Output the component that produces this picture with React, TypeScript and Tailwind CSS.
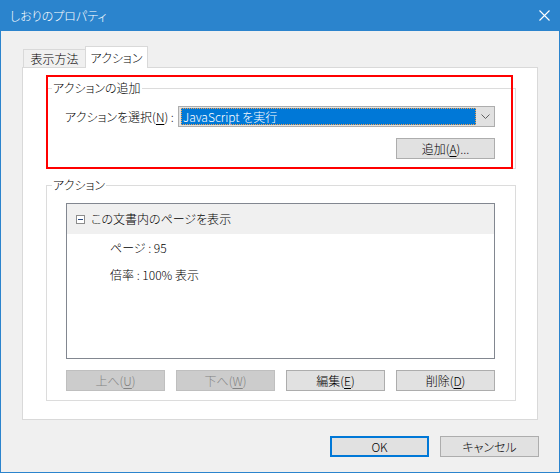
import React from "react";

const Mn = ({ k }: { k: string }) => (
  <span>
    (<span className="underline underline-offset-2">{k}</span>)
  </span>
);

function Btn({
  children,
  disabled,
  primary,
}: {
  children: React.ReactNode;
  disabled?: boolean;
  primary?: boolean;
}) {
  let cls = "w-[99px] h-[21px] flex items-center justify-center text-[12px] leading-none ";
  if (disabled) {
    cls += "bg-[#cccccc] border border-[#bfbfbf] text-[#838383]";
  } else if (primary) {
    cls += "bg-[#e1e1e1] border-2 border-[#0078d7] text-black";
  } else {
    cls += "bg-[#e1e1e1] border border-[#adadad] text-black";
  }
  return (
    <button type="button" disabled={disabled} className={cls}>
      {children}
    </button>
  );
}

export default function App() {
  return (
    <div className="w-[560px] h-[473px] flex flex-col font-['Noto_Sans_CJK_JP','Liberation_Sans',sans-serif] font-light [font-feature-settings:'palt'] text-[12px] text-black select-none">
      {/* title bar */}
      <div className="h-[31px] bg-[#2b84cd] flex items-center justify-between pl-[10px] pr-[10px] text-white">
        <span className="text-[12px]">しおりのプロパティ</span>
        <svg width="11" height="11" viewBox="0 0 11 11">
          <path d="M0.5 0.5 L10.5 10.5 M10.5 0.5 L0.5 10.5" stroke="white" strokeWidth="1.1" />
        </svg>
      </div>

      <div className="flex-1 bg-[#f0f0f0] border-x border-b border-[#2b84cd] flex flex-col">
        {/* tabs */}
        <div className="mt-[15px] ml-[22px] h-[21px] flex items-end">
          <div className="w-[62px] h-[18px] border-t border-l border-[#d9d9d9] bg-[#f0f0f0] flex items-center justify-center">
            表示方法
          </div>
          <div className="relative z-10 -mb-px w-[63px] h-[22px] border-x border-t border-[#d9d9d9] bg-white flex items-center justify-center">
            アクション
          </div>
        </div>

        {/* tab panel */}
        <div className="relative ml-[21px] w-[516px] h-[353px] border border-[#d9d9d9] bg-white">
          {/* アクションの追加 */}
          <fieldset className="ml-[23px] mt-[12px] w-[470px] border border-[#dcdcdc] pb-[9px]">
            <legend className="ml-[5px] px-[1px] leading-[16px]">アクションの追加</legend>
            <div className="pl-[18px] pr-[20px]">
              <div className="mt-[10px] flex items-center justify-between h-[21px]">
                <span>
                  アクションを選択<Mn k="N" /> :
                </span>
                <div className="w-[317px] h-[21px] border border-[#adadad] bg-[#e1e1e1] flex pl-[2px] py-[1px]">
                  <div className="flex-1 bg-[#0078d7] border border-dotted border-[#f0a050] text-white flex items-center pl-[1px] leading-none">
                    JavaScript を実行
                  </div>
                  <div className="w-[18px] flex items-center justify-center">
                    <svg width="9" height="5" viewBox="0 0 9 5">
                      <path d="M0.5 0.5 L4.5 4.5 L8.5 0.5" fill="none" stroke="#606060" strokeWidth="1" />
                    </svg>
                  </div>
                </div>
              </div>
              <div className="mt-[11px] flex justify-end">
                <Btn>
                  追加<Mn k="A" />...
                </Btn>
              </div>
            </div>
          </fieldset>

          {/* アクション */}
          <fieldset className="ml-[23px] mt-[8px] w-[470px] border border-[#dcdcdc] pb-[9px]">
            <legend className="ml-[5px] px-[1px] leading-[16px]">アクション</legend>
            <div className="pl-[19px] pr-[20px]">
              <div className="mt-[10px] h-[156px] border border-[#828790] bg-white">
                <div className="h-[30px] bg-[#f0f0f0] flex items-center pl-[9px]">
                  <span className="w-[9px] h-[9px] border border-[#8c8c8c] bg-white flex items-center justify-center">
                    <span className="w-[5px] h-px bg-[#2a4a80]" />
                  </span>
                  <span className="ml-[6px]">この文書内のページを表示</span>
                </div>
                <div className="h-[27px] flex items-center pl-[43px]">ページ : 95</div>
                <div className="h-[27px] flex items-center pl-[43px]">倍率 : 100% 表示</div>
              </div>
              <div className="mt-[11px] flex gap-[11px]">
                <Btn disabled>
                  上へ<Mn k="U" />
                </Btn>
                <Btn disabled>
                  下へ<Mn k="W" />
                </Btn>
                <Btn>
                  編集<Mn k="E" />
                </Btn>
                <Btn>
                  削除<Mn k="D" />
                </Btn>
              </div>
            </div>
          </fieldset>

          {/* highlight annotation */}
          <div className="absolute left-[23px] top-[7px] w-[467px] h-[94px] border-2 border-[#ff0000] pointer-events-none" />
        </div>

        {/* dialog buttons */}
        <div className="mt-[16px] flex justify-end gap-[11px] pr-[20px]">
          <Btn primary>OK</Btn>
          <Btn>キャンセル</Btn>
        </div>
      </div>
    </div>
  );
}
